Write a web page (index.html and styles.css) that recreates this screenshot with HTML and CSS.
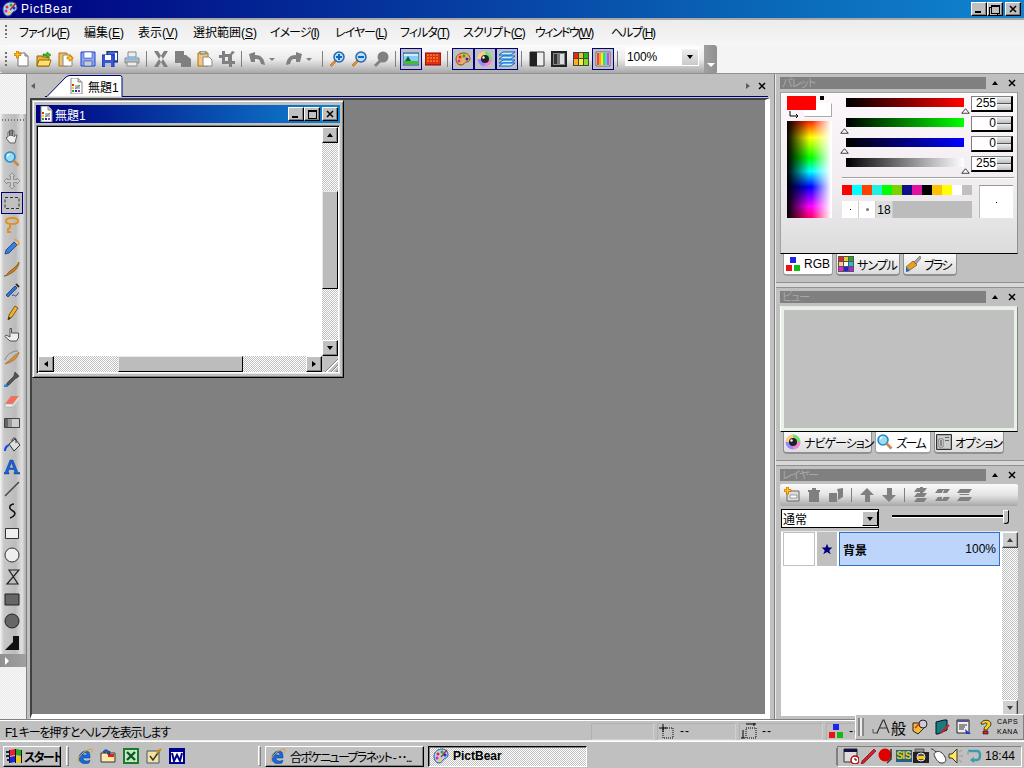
FILE: index.html
```html
<!DOCTYPE html>
<html lang="ja">
<head>
<meta charset="utf-8">
<title>PictBear</title>
<link rel="stylesheet" href="styles.css">
</head>
<body>
<svg class="defs" xmlns="http://www.w3.org/2000/svg">
<symbol id="appicon" viewBox="0 0 16 16"><path d="M1 8c0-4 4-7 8-7s6 3 6 6-3 3-4 4-2 4-5 4-5-3-5-7z" fill="#b8d0ec" stroke="#305890"/><circle cx="5" cy="6" r="1.500" fill="#e22"/><circle cx="9" cy="4" r="1.500" fill="#2a2"/><circle cx="12" cy="7" r="1.500" fill="#22d"/><circle cx="4" cy="10" r="1.500" fill="#d2d"/><circle cx="7" cy="12" r="1.500" fill="#fc2"/><path d="M8 9l6-7" stroke="#a22" stroke-width="1.200"/></symbol>
<symbol id="palette" viewBox="0 0 16 16"><path d="M1 8c0-4 4-6 8-6s6 3 6 6-3 3-4 3-2 3-5 3-5-2-5-6z" fill="#e8b060" stroke="#805020"/><circle cx="5" cy="6" r="1.500" fill="#e22"/><circle cx="9" cy="5" r="1.500" fill="#2a2"/><circle cx="12" cy="8" r="1.500" fill="#22d"/><circle cx="4" cy="10" r="1.500" fill="#d2d"/></symbol>
<symbol id="doc" viewBox="0 0 16 16"><path d="M3 0h7l4 4v12H3z" fill="#fff" stroke="#888"/><path d="M10 0v4h4" fill="#ccc" stroke="#888"/><path d="M4 6h2v2H4z" fill="#e22"/><path d="M4 9h2v2H4z" fill="#fc0"/><path d="M4 12h2v2H4z" fill="#2a2"/><path d="M7 12h2v2H7z" fill="#22c"/><path d="M10 12h2v2h-2z" fill="#a2c"/><path d="M7 7h5v4H7z" fill="#8cd"/><path d="M7 11l5-4" stroke="#c60"/></symbol>
<symbol id="new" viewBox="0 0 16 16"><path d="M4 2h7l3 3v10H4z" fill="#fff" stroke="#777"/><path d="M11 2v3h3" fill="#ccc" stroke="#777"/><path d="M2.500 0h2v2.500H7v2H4.500V7h-2V4.500H0v-2h2.500z" fill="#fc0" stroke="#c60" stroke-width=".7"/></symbol>
<symbol id="open" viewBox="0 0 16 16"><path d="M1 5h5l1 1h6v9H1z" fill="#e8b040" stroke="#960"/><path d="M1 15l2-6h12l-2 6z" fill="#ffe070" stroke="#960"/><path d="M7 3h4V1l4 3-4 3V5H7z" fill="#4b3" stroke="#270" stroke-width=".6"/></symbol>
<symbol id="tmpl" viewBox="0 0 16 16"><path d="M1 2h8v13H1z" fill="#f0c070" stroke="#a70"/><path d="M5 4h7l2 2v9H5z" fill="#fff" stroke="#888"/><path d="M11 4h2v2h2v2h-2v2h-2V8H9V6h2z" fill="#fc0" stroke="#c60" stroke-width=".6"/></symbol>
<symbol id="save" viewBox="0 0 16 16"><path d="M1 1h14v14H1z" fill="#8aa8e8" stroke="#2244cc"/><path d="M4 1h8v6H4z" fill="#fff" stroke="#2244cc" stroke-width=".6"/><path d="M4 10h8v5H4z" fill="#ccc" stroke="#2244cc" stroke-width=".6"/></symbol>
<symbol id="saveall" viewBox="0 0 16 16"><path d="M5 0h11v11H5z" fill="#4468d8" stroke="#113"/><path d="M0 4h12v12H0z" fill="#3858d0" stroke="#1133bb"/><path d="M3 4h6v5H3z" fill="#fff"/><path d="M3 12h6v4H3z" fill="#bbc"/><path d="M13 2h2v7h-2z" fill="#fff"/></symbol>
<symbol id="print" viewBox="0 0 16 16"><path d="M4 1h8v5H4z" fill="#eee" stroke="#888"/><path d="M1 7h14v5H1z" fill="#bbb" stroke="#888"/><path d="M3 6h10l2 3H1z" fill="#8bd" /><path d="M3 11h10v4H3z" fill="#eee" stroke="#888"/></symbol>
<symbol id="cut" viewBox="0 0 16 16"><path d="M1 0h4l10 16h-4zM15 0h-4L1 16h4z" fill="#808080"/></symbol>
<symbol id="copy" viewBox="0 0 16 16"><path d="M0 0h9v4H6v8H0z" fill="#808080"/><path d="M6 4h5l5 4v8H6z" fill="#808080"/></symbol>
<symbol id="paste" viewBox="0 0 16 16"><path d="M1 2h10v13H1z" fill="#f0c880" stroke="#a70"/><path d="M3 0h6v3H3z" fill="#ccc" stroke="#777"/><path d="M6 6h6l3 3v6H6z" fill="#fff" stroke="#888"/></symbol>
<symbol id="crop" viewBox="0 0 16 16"><path d="M3 0h3v3h5l2-3 3 1-3 3v6h3v3h-3v3h-3v-3H3V7H0V4h3zM6 6v4h3V6z" fill="#808080" fill-rule="evenodd"/></symbol>
<symbol id="undo" viewBox="0 0 16 16"><path d="M0 3l6-2v3c6 0 9 3 10 10l-4-1-1-3c-1-2-3-2-5-2v3H2z" fill="#808080"/></symbol>
<symbol id="redo" viewBox="0 0 16 16"><path d="M16 3l-6-2v3C4 4 1 7 0 14l4-1 1-3c1-2 3-2 5-2v3h4z" fill="#808080"/></symbol>
<symbol id="zin" viewBox="0 0 16 16"><path d="M6 9l-5 5 1.500 1.500 5-5z" fill="#e09030" stroke="#a50" stroke-width=".5"/><circle cx="10" cy="6" r="5" fill="#bde" stroke="#26a" stroke-width="1.500"/><path d="M7 5h6v2H7zM9 3h2v6H9z" fill="#16c"/></symbol>
<symbol id="zout" viewBox="0 0 16 16"><path d="M6 9l-5 5 1.500 1.500 5-5z" fill="#e09030" stroke="#a50" stroke-width=".5"/><circle cx="10" cy="6" r="5" fill="#bde" stroke="#26a" stroke-width="1.500"/><path d="M7 5h6v2H7z" fill="#16c"/></symbol>
<symbol id="zgray" viewBox="0 0 16 16"><circle cx="10" cy="6" r="5.500" fill="#808080"/><path d="M7 8l-6 6 2 2 6-6z" fill="#808080"/></symbol>
<symbol id="land" viewBox="0 0 16 16"><path d="M0 2h16v12H0z" fill="#8cf" stroke="#258"/><path d="M1 10h14v3H1z" fill="#4b3"/><path d="M5 5l3 5H2z" fill="#163"/><path d="M1 3h14v2H1z" fill="#fff" opacity=".6"/></symbol>
<symbol id="redb" viewBox="0 0 16 16"><path d="M0 2h16v12H0z" fill="#e03010"/><path d="M2 4h12M2 7h12M2 10h12" stroke="#ffb040" stroke-dasharray="2 1"/><path d="M0 2h16v12H0z" fill="none" stroke="#800"/></symbol>
<symbol id="eye" viewBox="0 0 16 16"><circle cx="8" cy="8" r="7.500" fill="#ddd"/><path d="M8 .5a7.500 7.500 0 0 1 7.500 7.500H8z" fill="#7d7"/><path d="M15.500 8A7.500 7.500 0 0 1 8 15.500V8z" fill="#e8c"/><path d="M8 15.500A7.500 7.500 0 0 1 .5 8H8z" fill="#98f"/><path d="M.5 8A7.500 7.500 0 0 1 8 .5V8z" fill="#fc8"/><circle cx="8" cy="8" r="4" fill="#222"/><circle cx="6.500" cy="6.500" r="1.200" fill="#fff"/></symbol>
<symbol id="layers" viewBox="0 0 16 16"><g fill="#cef" stroke="#06c"><path d="M4 1h12l-4 3H0z"/><path d="M4 5h12l-4 3H0z"/><path d="M4 9h12l-4 3H0z"/><path d="M4 12h12l-4 3H0z"/></g></symbol>
<symbol id="c1" viewBox="0 0 16 16"><path d="M1 1h14v14H1z" fill="#eee" stroke="#333"/><path d="M1 1h7v14H1z" fill="#222"/></symbol>
<symbol id="c2" viewBox="0 0 16 16"><path d="M1 1h14v14H1z" fill="#888" stroke="#222" stroke-width="2"/><path d="M3 3h3v10H3z" fill="#333"/><path d="M6 3h3v10H6z" fill="#777"/><path d="M9 3h4v10H9z" fill="#ddd"/></symbol>
<symbol id="c3" viewBox="0 0 16 16"><path d="M0 1h16v14H0z" fill="#444"/><path d="M1 2h4v5H1z" fill="#e22"/><path d="M6 2h4v5H6z" fill="#dc2"/><path d="M11 2h4v5h-4z" fill="#2b2"/><path d="M1 8h4v6H1z" fill="#fa2"/><path d="M6 8h4v6H6z" fill="#fe2"/><path d="M11 8h4v6h-4z" fill="#8d2"/></symbol>
<symbol id="c4" viewBox="0 0 16 16"><path d="M1 1h14v14H1z" fill="#fff" stroke="#666"/><path d="M2 2h2v12H2z" fill="#e44"/><path d="M4 2h2v12H4z" fill="#f92"/><path d="M6 2h2v12H6z" fill="#ee3"/><path d="M8 2h2v12H8z" fill="#4d4"/><path d="M10 2h2v12h-2z" fill="#4cf"/><path d="M12 2h2v12h-2z" fill="#d4d"/></symbol>
<symbol id="hand" viewBox="0 0 16 16"><path d="M4 8V3h1.500v4V1.500H7V7V1h1.500v6V2H10v6l1.500-2H13l-2 8H6L2 9l1-1z" fill="#eee" stroke="#555" stroke-width=".9"/></symbol>
<symbol id="zoom" viewBox="0 0 16 16"><circle cx="6" cy="6" r="5" fill="#9de" stroke="#28c" stroke-width="1.600"/><path d="M3 3l3 0-3 3z" fill="#fff"/><path d="M9.500 9.500l5 5" stroke="#c84" stroke-width="2.600"/></symbol>
<symbol id="move" viewBox="0 0 16 16"><path d="M8 0l3 3H9.500v3.500H13V5l3 3-3 3V9.500H9.500V13H11l-3 3-3-3h1.500V9.500H3V11L0 8l3-3v1.500h3.500V3H5z" fill="#ccc" stroke="#888" stroke-width=".8"/></symbol>
<symbol id="marq" viewBox="0 0 16 16"><path d="M1 2.500h14v11H1z" fill="none" stroke="#333" stroke-dasharray="3 2"/></symbol>
<symbol id="lasso" viewBox="0 0 16 16"><path d="M2 4c0-2 3-3 6-3s6 1 6 3-3 3-6 3-6-1-6-3zM6 7v4l-2 1v3h3" fill="none" stroke="#e09020" stroke-width="2"/></symbol>
<symbol id="pen" viewBox="0 0 16 16"><path d="M1 15l1-4 8-8 3 3-8 8z" fill="#3a7de0" stroke="#036"  stroke-width=".7"/><path d="M10 1c2-1 5 1 5 4l-2 1" fill="none" stroke="#e8a030" stroke-width="1.400"/></symbol>
<symbol id="brush" viewBox="0 0 16 16"><path d="M0 15c3 0 3-3 6-5s7-5 9-9c0 4-3 8-6 10s-6 4-9 4z" fill="#d07818" stroke="#640" stroke-width=".6"/></symbol>
<symbol id="air" viewBox="0 0 16 16"><path d="M2 12L11 3l2 2-9 9z" fill="#3a70d0" stroke="#036" stroke-width=".7"/><path d="M8 13c2-3 3 2 5-1s1-2 2-2" fill="none" stroke="#24a" /><path d="M12 1l3 3" stroke="#333" stroke-width="2"/></symbol>
<symbol id="pencil" viewBox="0 0 16 16"><path d="M4 15l1-5 6-9 3 2-6 9z" fill="#f0b030" stroke="#640" stroke-width=".8"/><path d="M4 15l1-3 2 1z" fill="#222"/></symbol>
<symbol id="finger" viewBox="0 0 16 16"><path d="M6 8V1.500h1.500V6h7v5l-2 3H6L1 9.500 2 8l4 2z" fill="#eee" stroke="#444" stroke-width=".9"/></symbol>
<symbol id="smudge" viewBox="0 0 16 16"><path d="M1 15l14-12c-1 6-6 10-14 12z" fill="#e09020" stroke="#864" stroke-width=".6"/><path d="M1 11c2-6 7-9 13-9" fill="none" stroke="#888"/></symbol>
<symbol id="drop" viewBox="0 0 16 16"><path d="M11 1l4 4-2 2-1 0-7 7-3 1 1-3 7-7 0-1z" fill="#555" stroke="#333" stroke-width=".6"/><path d="M0 14c2-1 4 0 4 2H0z" fill="#1a8ae0"/></symbol>
<symbol id="erase" viewBox="0 0 16 16"><path d="M1 11l6-8h8l-6 8z" fill="#f07060"/><path d="M1 11h8v3H1z" fill="#eee" stroke="#aaa" stroke-width=".7"/><path d="M9 11l6-8v3l-6 8z" fill="#ddd"/></symbol>
<symbol id="grad" viewBox="0 0 16 16"><path d="M.5 3.500h15v9H.5z" fill="#999" stroke="#444"/><path d="M8 4h7v8H8z" fill="#ccc"/><path d="M1 4h3v8H1z" fill="#666"/></symbol>
<symbol id="bucket" viewBox="0 0 16 16"><path d="M5 7l6-5 5 6-6 6z" fill="#ddd" stroke="#333"/><path d="M5 7c-3 1-5 3-5 7h2c0-2 1-4 3-5z" fill="#1050e0"/><path d="M8 4c0-3 3-4 4-2v4" fill="none" stroke="#333"/></symbol>
<symbol id="txt" viewBox="0 0 16 16"><path d="M0 15v-1.500h1L6 1h3l5 12.500h2V15h-6v-1.500h1l-1-3H5l-1 3h1V15zM5.500 9h4L7.500 3.500z" fill="#1a60e0" stroke="#036" stroke-width=".4"/></symbol>
<symbol id="line" viewBox="0 0 16 16"><path d="M1 15L15 1" stroke="#444" stroke-width="1.500"/></symbol>
<symbol id="curve" viewBox="0 0 16 16"><path d="M10 1C4 2 5 6 9 8s1 6-3 7" fill="none" stroke="#111" stroke-width="1.500"/></symbol>
<symbol id="rect" viewBox="0 0 16 16"><path d="M1.500 3.500h13v10h-13z" fill="#eee" stroke="#333"/></symbol>
<symbol id="ell" viewBox="0 0 16 16"><circle cx="8" cy="8" r="7" fill="#eee" stroke="#333"/></symbol>
<symbol id="poly" viewBox="0 0 16 16"><path d="M5 1h10L3 15h11L5 1z" fill="none" stroke="#222" stroke-width="1.200"/></symbol>
<symbol id="frect" viewBox="0 0 16 16"><path d="M1 3h14v11H1z" fill="#666" stroke="#222"/></symbol>
<symbol id="fell" viewBox="0 0 16 16"><circle cx="8" cy="8" r="7" fill="#666" stroke="#222"/></symbol>
<symbol id="fpoly" viewBox="0 0 16 16"><path d="M1 15L9 7V1h6v14z" fill="#111"/></symbol>
<symbol id="star" viewBox="0 0 16 16"><path d="M8 1l2 5h5l-4 4 2 5-5-3-5 3 2-5-4-4h5z" fill="#000080"/></symbol>
<symbol id="rgb" viewBox="0 0 16 16"><path d="M5 1h6v6H5z" fill="#22e"/><path d="M1 9h6v6H1z" fill="#e11"/><path d="M9 9h6v6H9z" fill="#1b1"/></symbol>
<symbol id="sample" viewBox="0 0 16 16"><path d="M0 0h16v16H0z" fill="#555"/><path d="M1 1h4v4H1z" fill="#e22"/><path d="M6 1h4v4H6z" fill="#ec2"/><path d="M11 1h4v4h-4z" fill="#2a2"/><path d="M1 6h4v4H1z" fill="#fc8"/><path d="M6 6h4v4H6z" fill="#fff"/><path d="M11 6h4v4h-4z" fill="#2bd"/><path d="M1 11h4v4H1z" fill="#e2d"/><path d="M6 11h4v4H6z" fill="#22d"/><path d="M11 11h4v4h-4z" fill="#a2e"/></symbol>
<symbol id="bigbrush" viewBox="0 0 16 16"><path d="M9 6l6-6 1 2-5 6z" fill="#aaa" stroke="#555" stroke-width=".6"/><path d="M1 11l7-6 4 4-7 5z" fill="#e8a020" stroke="#640" stroke-width=".6"/><path d="M1 11l4 4-4 1z" fill="#16c"/></symbol>
<symbol id="opts" viewBox="0 0 16 16"><path d="M.5 .5h15v15H.5z" fill="#aaa" stroke="#333"/><path d="M2 2h12v12H2z" fill="#ccc"/><path d="M3 5h4v8H3z" fill="#fff" stroke="#333" stroke-width=".6"/><path d="M4.500 6h1v6h-1z" fill="#111"/><path d="M9 3h4v1H9zM9 6h4v1H9z" fill="#666"/></symbol>
<symbol id="lnew" viewBox="0 0 16 16"><path d="M3 4h12v10H3z" fill="#ddd" stroke="#666"/><path d="M6 8h7v3H6z" fill="#fff" stroke="#666" stroke-width=".6"/><path d="M2.500 0h2v2.500H7v2H4.500V7h-2V4.500H0v-2h2.500z" fill="#fc0" stroke="#c60" stroke-width=".7"/></symbol>
<symbol id="ltrash" viewBox="0 0 16 16"><path d="M2 3h12v2H2zM6 1h4v2H6zM3 5h10v10H3z" fill="#808080"/></symbol>
<symbol id="lcopy" viewBox="0 0 16 16"><path d="M1 6h8v9H1zM9 2l6-1v9l-5 3V5z" fill="#808080"/></symbol>
<symbol id="lup" viewBox="0 0 16 16"><path d="M8 1l7 7h-4v7H6V8H1z" fill="#808080"/></symbol>
<symbol id="ldown" viewBox="0 0 16 16"><path d="M8 15L1 8h5V1h5v7h4z" fill="#808080"/></symbol>
<symbol id="lm1" viewBox="0 0 16 16"><path d="M5 1h10l-3 4H2zM5 6h10l-3 4H2zM5 11h10l-3 4H2z" fill="#808080"/><path d="M8 0h3v8H8z" fill="#808080"/></symbol>
<symbol id="lm2" viewBox="0 0 16 16"><path d="M4 2h12l-3 4H1zM4 10h12l-3 4H1z" fill="#808080"/><path d="M10 3l-3 5h3l-2 4" fill="none" stroke="#eee"/></symbol>
<symbol id="lm3" viewBox="0 0 16 16"><path d="M4 2h12l-3 4H1zM4 10h12l-3 4H1zM4 7h9v1H3z" fill="#808080"/></symbol>
<symbol id="flag" viewBox="0 0 16 16"><path d="M0 3h3v2H0zM0 7h3v2H0zM1 11h2v2H1z" fill="#225"/><path d="M4 2l5-1v6L4 8z" fill="#e22"/><path d="M10 1l5 1v6l-5-1z" fill="#2a2"/><path d="M4 9l5-1v6l-5 1z" fill="#22d"/><path d="M10 8l5 1v6l-5-1z" fill="#ec1"/><path d="M3.500 2v13M9.500 1v14M15.500 2v13" stroke="#111"/></symbol>
<symbol id="ie" viewBox="0 0 16 16"><path d="M13 10H6c0 3 4 4 7 2l-1 3c-5 2-10 0-10-5s6-9 10-6c1 2 1 4 1 6zM6 7h4c0-3-4-3-4 0z" fill="#1868d8" stroke="#0a3a90" stroke-width=".5"/><path d="M1 14C0 9 8 2 14 1c2 1 1 3 0 4" fill="none" stroke="#e0a020"/></symbol>
<symbol id="mail" viewBox="0 0 16 16"><path d="M1 5h14v9H1z" fill="#ffe9a8" stroke="#333"/><path d="M8 6h6v3H8z" fill="#d22"/><path d="M3 4c1-3 5-3 6 0l1-1v3H7l1-1c-1-2-3-1-3 0z" fill="#1a5cd0" stroke="#003" stroke-width=".4"/></symbol>
<symbol id="excel" viewBox="0 0 16 16"><path d="M0 0h16v16H0z" fill="#1a7a30"/><path d="M2 2h12v12H2z" fill="#c8e4c8"/><path d="M4 4l8 8M12 4l-8 8" stroke="#0a5a20" stroke-width="2.400"/></symbol>
<symbol id="check" viewBox="0 0 16 16"><path d="M1 3h12v12H1z" fill="#f4e0a0" stroke="#456"/><path d="M4 8l3 4 7-10" fill="none" stroke="#333" stroke-width="1.400"/><path d="M11 5l4-4" stroke="#d80" stroke-width="2"/></symbol>
<symbol id="word" viewBox="0 0 16 16"><path d="M0 0h16v16H0z" fill="#000090"/><path d="M2 2h12v12H2z" fill="#fff"/><path d="M3 5l2 8 3-6 3 6 2-8" fill="none" stroke="#000090" stroke-width="2"/><path d="M2 2h12v2H2z" fill="#000090"/></symbol>
<symbol id="t1" viewBox="0 0 16 16"><path d="M1 1h13v13H1z" fill="#ddd" stroke="#333"/><path d="M1 1h13v3H1z" fill="#114"/><circle cx="12" cy="12" r="4" fill="#fff" stroke="#b00" stroke-width="1.500"/><path d="M12 10v2h2" stroke="#111" fill="none"/></symbol>
<symbol id="t2" viewBox="0 0 16 16"><path d="M0 16l3-1 12-12-2-2L1 13z" fill="#d02030" stroke="#600" stroke-width=".6"/></symbol>
<symbol id="t3" viewBox="0 0 16 16"><circle cx="7" cy="7" r="6.500" fill="#e00000"/><path d="M13 1v10l-4 4" fill="none" stroke="#333" stroke-width="1.500"/></symbol>
<symbol id="t5" viewBox="0 0 16 16"><path d="M0 4h16v11H0z" fill="#222"/><path d="M2 1h9v3H2z" fill="#999" stroke="#222" stroke-width=".6"/><circle cx="8" cy="9" r="4" fill="#555" stroke="#eee"/><path d="M5 8h6v3H5z" fill="#fc0"/></symbol>
<symbol id="t6" viewBox="0 0 16 16"><path d="M5 4c3-2 7 1 9 5s0 6-3 6-5-2-7-6 0-4 1-5z" fill="#fff" stroke="#333"/><path d="M0 1c2 0 3 1 5 3" fill="none" stroke="#333"/></symbol>
<symbol id="t7" viewBox="0 0 16 16"><path d="M1 6h3l5-5v14l-5-5H1z" fill="#ffe860" stroke="#333"/><path d="M11 4l3-2M11 8h4M11 12l3 2" stroke="#999"/></symbol>
<symbol id="t8" viewBox="0 0 16 16"><path d="M2 3h9c4 0 4 9 0 9H6" fill="none" stroke="#3a9ab0" stroke-width="2.400"/><path d="M8 9l-4 3 4 3z" fill="#3a9ab0"/><path d="M2 3v4" stroke="#aaa" stroke-width="2"/></symbol>
<symbol id="l1" viewBox="0 0 18 18"><path d="M1 15h5M1 11v4" stroke="#777" stroke-width="1.500"/><path d="M5 15L11 2h1l5 13M7 10h8" fill="none" stroke="#333" stroke-width="1.200"/></symbol>
<symbol id="l2" viewBox="0 0 16 16"><path d="M1 4h8l3 5-6 6-5-3z" fill="#f0c030" stroke="#222"/><circle cx="11" cy="5" r="4" fill="#ccd" stroke="#222"/><path d="M3 9l5-5" stroke="#d22" stroke-width="1.400"/></symbol>
<symbol id="l3" viewBox="0 0 16 16"><path d="M2 3l8-2h3v10l-9 4H2z" fill="#1a7a80" stroke="#012"/><path d="M7 14l8-8" stroke="#c22" stroke-width="2"/></symbol>
<symbol id="l4" viewBox="0 0 16 16"><path d="M1 1h12v13H1z" fill="#eee" stroke="#222"/><path d="M1 1h12v2H1z" fill="#558"/><path d="M3 6h8M3 8h6M3 10h5" stroke="#333"/><path d="M9 10l6 5h-5z" fill="#1a3ad0"/></symbol>
<symbol id="l5" viewBox="0 0 16 16"><path d="M3 5c0-5 10-5 10 0 0 3-4 4-4 6H6c0-4 3-4 3-6s-3-1-3 0z" fill="#f8d820" stroke="#111" stroke-width=".8"/><path d="M5 12h5v3H5z" fill="#d22" stroke="#111" stroke-width=".6"/></symbol>
<symbol id="tri-up" viewBox="0 0 8 8"><path d="M4 2l3 4H1z" fill="#000"/></symbol>
<symbol id="tri-down" viewBox="0 0 8 8"><path d="M1 2h6L4 6z" fill="#000"/></symbol>
<symbol id="tri-left" viewBox="0 0 8 8"><path d="M6 1v6L2 4z" fill="#000"/></symbol>
<symbol id="tri-right" viewBox="0 0 8 8"><path d="M2 1v6l4-3z" fill="#000"/></symbol>
<symbol id="x" viewBox="0 0 8 8"><path d="M1 1l6 6M7 1L1 7" stroke="#000" stroke-width="1.500"/></symbol>
<symbol id="mark" viewBox="0 0 12 8"><path d="M6 1l5 6H1z" fill="#fff" stroke="#000"/></symbol>
<symbol id="swap" viewBox="0 0 10 8"><path d="M1 0v5h8M7 3l2 2-2 2" fill="none" stroke="#000"/></symbol>
<symbol id="st1" viewBox="0 0 16 16"><path d="M4 5h10v10H4z" fill="none" stroke="#000" stroke-dasharray="1 1"/><path d="M0 5h8M4 1v8" stroke="#000"/></symbol>
<symbol id="st2" viewBox="0 0 16 16"><path d="M5 5h10v10H5z" fill="none" stroke="#000" stroke-dasharray="1 1"/><path d="M5 1h10M2 7v8M0 15h4M13 0v3" stroke="#000"/></symbol>
</svg>

<div class="app">
  <header class="titlebar">
    <svg class="ico16"><use href="#appicon"/></svg>
    <span class="titlebar-text">PictBear</span>
    <div class="winbtns">
      <button class="winbtn"><span class="g-min"></span></button>
      <button class="winbtn"><span class="g-res"></span></button>
      <button class="winbtn winbtn-close"><svg class="ico8"><use href="#x"/></svg></button>
    </div>
  </header>

  <nav class="menubar">
    <span class="grip-v"></span>
    <span class="menu-item ls-10">ファイル(<u>F</u>)</span>
    <span class="menu-item">編集(<u>E</u>)</span>
    <span class="menu-item">表示(<u>V</u>)</span>
    <span class="menu-item">選択範囲(<u>S</u>)</span>
    <span class="menu-item ls-10">イメージ(<u>I</u>)</span>
    <span class="menu-item ls-10">レイヤー(<u>L</u>)</span>
    <span class="menu-item ls-10">フィルタ(<u>T</u>)</span>
    <span class="menu-item ls-8">スクリプト(<u>C</u>)</span>
    <span class="menu-item ls-16">ウィンドウ(<u>W</u>)</span>
    <span class="menu-item ls-12">ヘルプ(<u>H</u>)</span>
  </nav>

  <div class="toolrow">
    <div class="toolbar">
      <span class="grip-v"></span>
      <span class="tb"><svg class="ico16"><use href="#new"/></svg></span>
      <span class="tb"><svg class="ico16"><use href="#open"/></svg></span>
      <span class="tb"><svg class="ico16"><use href="#tmpl"/></svg></span>
      <span class="tb"><svg class="ico16"><use href="#save"/></svg></span>
      <span class="tb"><svg class="ico16"><use href="#saveall"/></svg></span>
      <span class="tb"><svg class="ico16"><use href="#print"/></svg></span>
      <span class="tsep"></span>
      <span class="tb"><svg class="ico16"><use href="#cut"/></svg></span>
      <span class="tb"><svg class="ico16"><use href="#copy"/></svg></span>
      <span class="tb"><svg class="ico16"><use href="#paste"/></svg></span>
      <span class="tb"><svg class="ico16"><use href="#crop"/></svg></span>
      <span class="tsep"></span>
      <span class="tb tb-drop"><svg class="ico16"><use href="#undo"/></svg><i class="drop-g"></i></span>
      <span class="tb tb-drop"><svg class="ico16"><use href="#redo"/></svg><i class="drop-g"></i></span>
      <span class="tsep"></span>
      <span class="tb"><svg class="ico16"><use href="#zin"/></svg></span>
      <span class="tb"><svg class="ico16"><use href="#zout"/></svg></span>
      <span class="tb"><svg class="ico16"><use href="#zgray"/></svg></span>
      <span class="tsep tsep-w"></span>
      <span class="tb tb-on"><svg class="ico16"><use href="#land"/></svg></span>
      <span class="tb"><svg class="ico16"><use href="#redb"/></svg></span>
      <span class="tsep tsep-w"></span>
      <span class="tb tb-on"><svg class="ico16"><use href="#palette"/></svg></span>
      <span class="tb tb-on"><svg class="ico16"><use href="#eye"/></svg></span>
      <span class="tb tb-on"><svg class="ico16"><use href="#layers"/></svg></span>
      <span class="tsep tsep-w"></span>
      <span class="tb"><svg class="ico16"><use href="#c1"/></svg></span>
      <span class="tb"><svg class="ico16"><use href="#c2"/></svg></span>
      <span class="tb"><svg class="ico16"><use href="#c3"/></svg></span>
      <span class="tb tb-on"><svg class="ico16"><use href="#c4"/></svg></span>
      <span class="tsep"></span>
      <span class="zoom-combo"><span class="zoom-val">100%</span><span class="combo-btn"><svg class="ico8"><use href="#tri-down"/></svg></span></span>
      <span class="tool-end"><i class="tool-end-g"></i></span>
    </div>
  </div>

  <main class="workspace">
    <aside class="leftcol">
      <div class="toolbox">
        <span class="tool-grip"></span>
        <span class="tl"><svg class="ico16"><use href="#hand"/></svg></span>
        <span class="tl"><svg class="ico16"><use href="#zoom"/></svg></span>
        <span class="tl"><svg class="ico16"><use href="#move"/></svg></span>
        <span class="tl tl-on"><svg class="ico16"><use href="#marq"/></svg></span>
        <span class="tl"><svg class="ico16"><use href="#lasso"/></svg></span>
        <span class="tl"><svg class="ico16"><use href="#pen"/></svg></span>
        <span class="tl"><svg class="ico16"><use href="#brush"/></svg></span>
        <span class="tl"><svg class="ico16"><use href="#air"/></svg></span>
        <span class="tl"><svg class="ico16"><use href="#pencil"/></svg></span>
        <span class="tl"><svg class="ico16"><use href="#finger"/></svg></span>
        <span class="tl"><svg class="ico16"><use href="#smudge"/></svg></span>
        <span class="tl"><svg class="ico16"><use href="#drop"/></svg></span>
        <span class="tl"><svg class="ico16"><use href="#erase"/></svg></span>
        <span class="tl"><svg class="ico16"><use href="#grad"/></svg></span>
        <span class="tl"><svg class="ico16"><use href="#bucket"/></svg></span>
        <span class="tl"><svg class="ico16"><use href="#txt"/></svg></span>
        <span class="tl"><svg class="ico16"><use href="#line"/></svg></span>
        <span class="tl"><svg class="ico16"><use href="#curve"/></svg></span>
        <span class="tl"><svg class="ico16"><use href="#rect"/></svg></span>
        <span class="tl"><svg class="ico16"><use href="#ell"/></svg></span>
        <span class="tl"><svg class="ico16"><use href="#poly"/></svg></span>
        <span class="tl"><svg class="ico16"><use href="#frect"/></svg></span>
        <span class="tl"><svg class="ico16"><use href="#fell"/></svg></span>
        <span class="tl"><svg class="ico16"><use href="#fpoly"/></svg></span>
        <span class="tool-more"></span>
      </div>
    </aside>

    <section class="docarea">
      <div class="tabstrip">
        <svg class="ico8 strip-arrow"><use href="#tri-left"/></svg>
        <div class="doctab">
          <svg class="doctab-shape" viewBox="0 0 78 22"><path d="M0 21.500h2L21 2q2-1.500 4-1.500h50q2 0 2 2v19" fill="#fff" stroke="#000080"/></svg>
          <svg class="ico16 doctab-ico"><use href="#doc"/></svg>
          <span class="doctab-text">無題1</span>
        </div>
        <span class="strip-fill"></span>
        <svg class="ico8 strip-arrow strip-right"><use href="#tri-right"/></svg>
        <svg class="ico8 strip-x"><use href="#x"/></svg>
      </div>
      <div class="mdi">
        <div class="child">
          <div class="child-title">
            <svg class="ico16"><use href="#doc"/></svg>
            <span class="child-text">無題1</span>
            <div class="winbtns child-btns">
              <button class="winbtn"><span class="g-min"></span></button>
              <button class="winbtn"><span class="g-max"></span></button>
              <button class="winbtn winbtn-close"><svg class="ico8"><use href="#x"/></svg></button>
            </div>
          </div>
          <div class="child-client">
            <div class="canvas-row">
              <div class="canvas"></div>
              <div class="vscroll">
                <span class="sb-btn"><svg class="ico8"><use href="#tri-up"/></svg></span>
                <span class="sb-track sb-v1"></span>
                <span class="sb-thumb sb-thumb-v"></span>
                <span class="sb-track"></span>
                <span class="sb-btn"><svg class="ico8"><use href="#tri-down"/></svg></span>
              </div>
            </div>
            <div class="hscroll">
              <span class="sb-btn"><svg class="ico8"><use href="#tri-left"/></svg></span>
              <span class="sb-track sb-h1"></span>
              <span class="sb-thumb sb-thumb-h"></span>
              <span class="sb-track"></span>
              <span class="sb-btn"><svg class="ico8"><use href="#tri-right"/></svg></span>
              <span class="sizegrip"></span>
            </div>
          </div>
        </div>
      </div>
    </section>

    <aside class="dock">
      <div class="caption"><span class="caption-bar ls-10">パレット</span><svg class="ico8"><use href="#tri-up"/></svg><svg class="ico8"><use href="#x"/></svg></div>
      <div class="panel panel-palette">
        <div class="pal-left">
          <div class="fgbg">
            <span class="bgcolor"></span><span class="fgcolor"></span><span class="minisq"></span>
            <svg class="swap"><use href="#swap"/></svg>
          </div>
          <div class="spectrum"></div>
        </div>
        <div class="pal-right">
          <div class="slrow"><div class="slbar sl-r"></div><svg class="mark mark-max"><use href="#mark"/></svg><div class="spin"><span class="spin-val">255</span><span class="spin-btns"><i></i><i></i></span></div></div>
          <div class="slrow"><div class="slbar sl-g"></div><svg class="mark mark-min"><use href="#mark"/></svg><div class="spin"><span class="spin-val">0</span><span class="spin-btns"><i></i><i></i></span></div></div>
          <div class="slrow"><div class="slbar sl-b"></div><svg class="mark mark-min"><use href="#mark"/></svg><div class="spin"><span class="spin-val">0</span><span class="spin-btns"><i></i><i></i></span></div></div>
          <div class="slrow"><div class="slbar sl-k"></div><svg class="mark mark-max"><use href="#mark"/></svg><div class="spin"><span class="spin-val">255</span><span class="spin-btns"><i></i><i></i></span></div></div>
          <div class="pal-sep"></div>
          <div class="pal-lower">
            <div class="pal-lower-left">
              <div class="swatches"><i class="s1"></i><i class="s2"></i><i class="s3"></i><i class="s4"></i><i class="s5"></i><i class="s6"></i><i class="s7"></i><i class="s8"></i><i class="s9"></i><i class="s10"></i><i class="s11"></i><i class="s12"></i><i class="s13"></i></div>
              <div class="brushes"><span class="brush-cell"><i class="dot"></i></span><span class="brush-cell"><i class="dot dot-soft"></i></span><span class="brush-cell brush-num">18</span><span class="brush-rest"></span></div>
            </div>
            <div class="brush-preview"><i class="dot"></i></div>
          </div>
        </div>
      </div>
      <div class="tabs">
        <span class="tab tab-on w50"><svg class="ico16"><use href="#rgb"/></svg>RGB</span>
        <span class="tab w64 ls-10"><svg class="ico16"><use href="#sample"/></svg>サンプル</span>
        <span class="tab w54 ls-16"><svg class="ico16"><use href="#bigbrush"/></svg>ブラシ</span>
      </div>
      <div class="splitter"></div>

      <div class="caption"><span class="caption-bar ls-10">ビュー</span><svg class="ico8"><use href="#tri-up"/></svg><svg class="ico8"><use href="#x"/></svg></div>
      <div class="panel panel-view"><div class="view-well"></div></div>
      <div class="tabs">
        <span class="tab w89 ls-10"><svg class="ico16"><use href="#eye"/></svg>ナビゲーション</span>
        <span class="tab tab-on w56 ls-16"><svg class="ico16"><use href="#zoom"/></svg>ズーム</span>
        <span class="tab w70 ls-12"><svg class="ico16"><use href="#opts"/></svg>オプション</span>
      </div>
      <div class="splitter"></div>

      <div class="caption"><span class="caption-bar ls-10">レイヤー</span><svg class="ico8"><use href="#tri-up"/></svg><svg class="ico8"><use href="#x"/></svg></div>
      <div class="layerbar">
        <span class="lb"><svg class="ico16"><use href="#lnew"/></svg></span>
        <span class="lb"><svg class="ico16"><use href="#ltrash"/></svg></span>
        <span class="lb"><svg class="ico16"><use href="#lcopy"/></svg></span>
        <span class="lsep"></span>
        <span class="lb"><svg class="ico16"><use href="#lup"/></svg></span>
        <span class="lb"><svg class="ico16"><use href="#ldown"/></svg></span>
        <span class="lsep"></span>
        <span class="lb"><svg class="ico16"><use href="#lm1"/></svg></span>
        <span class="lb"><svg class="ico16"><use href="#lm2"/></svg></span>
        <span class="lb"><svg class="ico16"><use href="#lm3"/></svg></span>
      </div>
      <div class="blendrow">
        <div class="blend"><span class="blend-val">通常</span><span class="combo-btn"><svg class="ico8"><use href="#tri-down"/></svg></span></div>
        <div class="opacity"><span class="opacity-thumb"></span></div>
      </div>
      <div class="layerlist">
        <div class="layer-main">
          <div class="layer-row">
            <span class="layer-thumb"></span>
            <span class="layer-eye"><svg class="ico16 star"><use href="#star"/></svg></span>
            <span class="layer-name"><b>背景</b><span>100%</span></span>
          </div>
        </div>
        <div class="vscroll">
          <span class="sb-btn sb-btn-dis"><svg class="ico8"><use href="#tri-up"/></svg></span>
          <span class="sb-track"></span>
          <span class="sb-btn sb-btn-dis"><svg class="ico8"><use href="#tri-down"/></svg></span>
        </div>
      </div>
    </aside>
  </main>

  <footer class="statusbar">
    <span class="status-msg"><span class="ls-12">F1 キーを押すとヘルプを表示します</span></span>
    <span class="pane p1"></span>
    <span class="pane p2"><svg class="ico16"><use href="#st1"/></svg>--</span>
    <span class="pane p3"><svg class="ico16"><use href="#st2"/></svg>--</span>
    <span class="pane p4"><svg class="ico16"><use href="#rgb"/></svg>--</span>
  </footer>

  <footer class="taskbar">
    <button class="startbtn"><svg class="ico16"><use href="#flag"/></svg><b class="start-label">スタート</b></button>
    <span class="tk-handle"></span>
    <div class="quick">
      <svg class="ico16"><use href="#ie"/></svg>
      <svg class="ico16"><use href="#mail"/></svg>
      <svg class="ico16"><use href="#excel"/></svg>
      <svg class="ico16"><use href="#check"/></svg>
      <svg class="ico16"><use href="#word"/></svg>
    </div>
    <span class="tk-handle"></span>
    <button class="taskbtn"><svg class="ico16"><use href="#ie"/></svg><span class="ls-16">合ポケニュープラネット - ･･...</span></button>
    <button class="taskbtn taskbtn-on"><svg class="ico16"><use href="#appicon"/></svg><b>PictBear</b></button>
    <span class="tk-fill"></span>
    <div class="tray">
      <svg class="ico16"><use href="#t1"/></svg>
      <svg class="ico16"><use href="#t2"/></svg>
      <svg class="ico16"><use href="#t3"/></svg>
      <span class="sis">SIS</span>
      <svg class="ico16"><use href="#t5"/></svg>
      <svg class="ico16"><use href="#t6"/></svg>
      <svg class="ico16"><use href="#t7"/></svg>
      <svg class="ico16"><use href="#t8"/></svg>
      <span class="clock">18:44</span>
    </div>
  </footer>

  <div class="langbar">
    <span class="lang-handle"></span>
    <svg class="lang-a"><use href="#l1"/></svg>
    <span class="lang-kan">般</span>
    <svg class="ico16"><use href="#l2"/></svg>
    <svg class="ico16"><use href="#l3"/></svg>
    <svg class="ico16"><use href="#l4"/></svg>
    <svg class="ico16"><use href="#l5"/></svg>
    <span class="lang-caps">CAPS<br>KANA</span>
  </div>
</div>
</body>
</html>
```

FILE: styles.css
```css
* { box-sizing: border-box; }
html, body { margin: 0; padding: 0; width: 1024px; height: 768px; overflow: hidden; }
body {
  font-family: "Liberation Sans", "Noto Sans CJK JP", sans-serif;
  font-size: 12px;
  font-feature-settings: "palt";
  color: #000;
  background: #c0c0c0;
}
.defs { position: absolute; width: 0; height: 0; overflow: hidden; }
button { font: inherit; margin: 0; padding: 0; color: inherit; }
i { font-style: normal; display: block; }
svg { display: block; flex: none; }
.ico16 { width: 16px; height: 16px; }
.ico8 { width: 8px; height: 8px; }
.ls-8 { letter-spacing: -.8px; }
.ls-10 { letter-spacing: -1px; }
.ls-12 { letter-spacing: -1.2px; }
.ls-16 { letter-spacing: -1.6px; }

.app { position: relative; width: 1024px; height: 768px; display: flex; flex-direction: column; }

/* title */
.titlebar {
  height: 18px; flex: none; display: flex; align-items: center; padding: 0 3px 0 2px; color: #fff;
  background: linear-gradient(to right, #000080, #0a68b8 75%, #1084d0);
}
.titlebar-text { margin-left: 3px; letter-spacing: .8px; }
.winbtns { margin-left: auto; display: flex; }
.winbtn {
  width: 16px; height: 14px; background: #c0c0c0; display: flex; align-items: center; justify-content: center;
  border: 1px solid; border-color: #fff #000 #000 #fff; box-shadow: inset -1px -1px 0 #808080; position: relative;
}
.winbtn-close { margin-left: 2px; }
.g-min { width: 6px; height: 2px; background: #000; margin-top: 6px; margin-right: 2px; }
.g-max { width: 9px; height: 9px; border: 1px solid #000; border-top-width: 2px; }
.g-res { width: 9px; height: 9px; border: 1px solid #000; border-top-width: 2px; box-shadow: -2px 2px 0 -1px #c0c0c0, -2px 2px 0 0 #000; }

/* menu */
.menubar {
  height: 27px; flex: none; display: flex; align-items: center; padding: 0 0 3px 5px;
  border-top: 2px solid #a8a8a8;
  background: linear-gradient(#ececec, #f6f6f6);
}
.grip-v { width: 2px; height: 13px; flex: none; background: repeating-linear-gradient(#707070 0 2px, transparent 2px 4px); }
.menu-item { flex: none; white-space: nowrap; width: 65px; }
.menu-item u { text-underline-offset: 1px; }
.menubar .grip-v { margin-right: 12px; }
.menu-item:nth-child(3) { width: 54px; }
.menu-item:nth-child(4) { width: 55px; }
.menu-item:nth-child(5) { width: 77px; }
.menu-item:nth-child(8) { width: 63px; }
.menu-item:nth-child(9) { width: 72px; }
.menu-item:nth-child(10) { width: 76px; }

/* toolbar */
.toolrow { height: 29px; flex: none; background: #f4f4f4; border-bottom: 1px solid #909090; }
.toolbar {
  width: 717px; height: 28px; display: flex; align-items: center; padding-left: 5px; position: relative;
  background: linear-gradient(#fbfbfb, #ececec 50%, #a8a8a8);
  border-radius: 3px 0 0 3px;
}
.toolbar .grip-v { margin-right: 4px; height: 14px; }
.tb { width: 22px; height: 22px; flex: none; display: flex; align-items: center; justify-content: center; }
.tb-on { background: #c0c0c0; border: 1px solid #000080; }
.tb-drop { width: 37px; justify-content: flex-start; padding-left: 4px; }
.drop-g { width: 0; height: 0; border: 3px solid transparent; border-top: 3px solid #808080; border-bottom: 0; margin-left: 4px; }
.tsep { width: 1px; height: 16px; flex: none; background: #808080; margin: 0 3px; }
.tsep-w { margin-right: 4px; }
.zoom-combo { width: 74px; height: 19px; flex: none; background: #fff; display: flex; align-items: center; margin-left: 4px; margin-top: -5px; padding-left: 2px; }
.zoom-val { flex: 1; letter-spacing: -.2px; }
.combo-btn { width: 16px; height: 16px; display: flex; align-items: center; justify-content: center; background: linear-gradient(#f0f0f0, #c8c8c8); flex: none; margin-right: 1px; }
.tool-end { margin-left: auto; width: 13px; height: 28px; background: linear-gradient(90deg, #a0a0a0, #909090); border-radius: 0 3px 3px 0; position: relative; display: flex; justify-content: center; align-items: flex-end; padding-bottom: 6px; }
.tool-end-g { width: 0; height: 0; border: 4px solid transparent; border-top: 4px solid #fff; border-bottom: 0; }

/* workspace */
.workspace { height: 646px; flex: none; display: flex; background: #c0c0c0; border-bottom: 1px solid #808080; }
.leftcol {
  width: 27px; flex: none; display: flex; flex-direction: column; padding-top: 40px;
  background: #f2f2f2 repeating-conic-gradient(#ececec 0 25%, #f6f6f6 0 50%) 0 0/2px 2px;
  border-right: 1px solid #808080;
}
.toolbox {
  display: flex; flex-direction: column;
  background: linear-gradient(90deg, #f4f4f4, #c8c8c8 15%, #bcbcbc 60%, #e0e0e0 85%, #a8a8a8);
}
.tool-grip { height: 12px; flex: none; background: radial-gradient(circle, #777 0 1px, transparent 1px) 4px 3px/3px 6px repeat-x; }
.tl { height: 22px; flex: none; width: 22px; margin-left: 1px; display: flex; align-items: center; justify-content: center; }
.tl-on { border: 1px solid #000080; background: #c0c0c0; }
.tool-more { height: 13px; flex: none; background: linear-gradient(90deg, #909090, #a0a0a0); position: relative; }
.tool-more::after { content: ""; position: absolute; left: 5px; top: 3px; border: 4px solid transparent; border-left: 4px solid #fff; border-right: 0; }

.docarea { width: 748px; flex: none; display: flex; flex-direction: column; border-right: 1px solid #808080; }
.tabstrip { height: 24px; flex: none; display: flex; align-items: center; padding: 0 8px 0 2px; position: relative; }
.strip-arrow { opacity: .5; }
.strip-right { margin-left: auto; }
.strip-x { margin-left: 6px; }
.strip-fill { height: 1px; background: #000080; position: absolute; left: 95px; right: 6px; bottom: 1px; }
.doctab { position: relative; width: 78px; height: 22px; margin: 0 0 1px 8px; align-self: flex-end; display: flex; align-items: center; padding-left: 23px; gap: 4px; }
.doctab-shape { position: absolute; left: 0; top: 0; width: 78px; height: 22px; }
.doctab-ico, .doctab-text { position: relative; }
.mdi {
  flex: 1; margin: 0 4px 0 3px; position: relative; background: #808080;
  border: 2px solid; border-color: #404040 #fff #fff #404040; border-width: 2px 5px 5px 2px;
}
.child {
  position: absolute; left: 0; top: 0; width: 312px; height: 278px; background: #c0c0c0; padding: 4px 3px 3px;
  border: 1px solid; border-color: #c0c0c0 #000 #000 #c0c0c0; box-shadow: inset 1px 1px 0 #fff, inset -1px -1px 0 #808080; display: flex; flex-direction: column;
}
.child-title {
  height: 18px; flex: none; display: flex; align-items: center; padding: 0 2px; color: #fff;
  background: linear-gradient(to right, #000080, #1084d0);
}
.child-text { margin-left: 1px; }
.child-client { flex: 1; margin-top: 2px; display: flex; flex-direction: column; background: #fff; border: 1px solid; border-color: #808080 #e8e8e8 #e8e8e8 #808080; box-shadow: inset 1px 1px 0 #000; min-height: 0; padding: 1px; }
.canvas-row { flex: 1; display: flex; min-height: 0; }
.canvas { flex: 1; background: #fff; }
.vscroll { width: 16px; flex: none; display: flex; flex-direction: column; }
.hscroll { height: 16px; flex: none; display: flex; background: #c0c0c0; }
.sb-btn { width: 16px; height: 16px; flex: none; background: #c0c0c0; border: 1px solid; border-color: #fff #000 #000 #fff; box-shadow: inset -1px -1px 0 #808080; display: flex; align-items: center; justify-content: center; }
.sb-track { flex: 1; background: repeating-conic-gradient(#fff 0 25%, #c0c0c0 0 50%) 0 0/2px 2px; }
.sb-v1 { flex: 0 0 48px; }
.sb-h1 { flex: 0 0 64px; }
.sb-thumb { background: #bcbcbc; border: 1px solid; border-color: #e8e8e8 #000 #000 #e8e8e8; flex: none; }
.sb-thumb-v { height: 98px; }
.sb-thumb-h { width: 125px; }
.sizegrip { width: 16px; height: 16px; flex: none; background: repeating-linear-gradient(135deg, #c0c0c0 0 1px, #808080 1px 2px, #fff 2px 3px, #c0c0c0 3px 4px); clip-path: polygon(100% 0, 100% 100%, 0 100%); }

/* dock */
.dock { width: 249px; flex: none; padding: 3px 6px 0 4px; display: flex; flex-direction: column; border-left: 1px solid #e8e8e8; }
.caption { height: 12px; flex: none; display: flex; align-items: center; gap: 9px; }
.caption-bar { width: 206px; height: 12px; background: #808080; color: #a8a8a8; font-size: 11px; line-height: 12px; padding-left: 2px; margin-right: -4px; flex: none; }
.panel { margin-top: 3px; flex: none; border: 1px solid; border-color: #a0a0a0 #909090 #000 #a0a0a0; }
.panel-palette { height: 162px; display: flex; background: linear-gradient(#fcf8fc, #f0ecf0 60%, #dcdcdc); padding: 3px 4px 0 6px; }
.pal-left { width: 46px; flex: none; }
.fgbg { height: 25px; position: relative; }
.fgcolor { position: absolute; left: 0; top: 0; width: 29px; height: 14px; background: #f00; }
.bgcolor { position: absolute; left: 17px; top: 7px; width: 28px; height: 14px; background: #fff; border: 1px solid; border-color: #fff #aaa #aaa #fff; }
.minisq { position: absolute; left: 33px; top: 0; width: 4px; height: 4px; background: #000; }
.swap { position: absolute; left: 2px; top: 15px; width: 10px; height: 8px; }
.spectrum {
  height: 97px; width: 45px;
  background:
    linear-gradient(90deg, #000, rgba(0,0,0,0) 50%, rgba(255,255,255,0) 55%, #fff 98%),
    linear-gradient(#ff2000, #ffff00 17%, #00ff00 38%, #00ffff 52%, #0000ff 68%, #ff00ff 88%, #ff0060);
}
.pal-right { width: 176px; margin-left: 9px; flex: none; }
.slrow { height: 20px; position: relative; display: flex; padding-left: 4px; }
.slbar { width: 118px; height: 9px; margin-top: 2px; flex: none; }
.sl-r { background: linear-gradient(90deg, #000, #f00); }
.sl-g { background: linear-gradient(90deg, #000, #0f0); }
.sl-b { background: linear-gradient(90deg, #000, #00f); }
.sl-k { background: linear-gradient(90deg, #000, #fff); }
.mark { position: absolute; top: 12px; width: 9px; height: 6px; }
.mark-min { left: -2px; }
.mark-max { left: 119px; }
.spin { margin-left: 7px; width: 42px; height: 16px; flex: none; background: #fff; border: 1px solid; border-color: #808080 #000 #000 #808080; border-width: 1px 2px 2px 1px; display: flex; line-height: 13px; }
.spin-val { flex: 1; text-align: right; padding-right: 1px; }
.spin-btns { width: 14px; flex: none; display: flex; flex-direction: column; background: #555; gap: 1px; }
.spin-btns i { flex: 1; background: linear-gradient(#f0f0f0, #bdbdbd); }
.pal-sep { height: 2px; width: 172px; background: #a0a0a0; border-bottom: 1px solid #fff; margin-top: 1px; }
.pal-lower { display: flex; margin-top: 6px; }
.pal-lower-left { width: 130px; flex: none; }
.swatches { display: grid; grid-template-columns: repeat(13, 10px); height: 10px; }
.s1 { background: #f00; } .s2 { background: #0ff; } .s3 { background: #ff4000; } .s4 { background: #20f0e0; } .s5 { background: #0f0; } .s6 { background: #80d000; } .s7 { background: #101088; } .s8 { background: #e010a0; } .s9 { background: #000; } .s10 { background: #ffc000; } .s11 { background: #ff0; } .s12 { background: #fff; } .s13 { background: #c0c0c0; }
.brushes { height: 17px; margin-top: 6px; display: flex; background: #bcbcbc; }
.brush-cell { width: 17px; flex: none; background: #fff; border-right: 1px solid #ccc; display: flex; align-items: center; justify-content: center; }
.brush-num { background: #ddd; font-size: 12px; }
.brush-rest { flex: 1; }
.dot { width: 1px; height: 1px; background: #000; }
.dot-soft { width: 3px; height: 3px; background: #777; border-radius: 50%; }
.brush-preview { width: 34px; height: 33px; margin-left: 7px; background: #fff; border-top: 1px solid #999; border-left: 1px solid #bbb; display: flex; align-items: center; justify-content: center; }

.tabs { height: 22px; flex: none; display: flex; gap: 3px; padding-left: 3px; }
.tab {
  height: 22px; flex: none; display: flex; align-items: center; padding-left: 1px; white-space: nowrap;
  background: linear-gradient(#fafafa, #dcdcdc); border: 1px solid #909090; border-width: 0 1px 2px 1px; border-radius: 0 0 4px 4px;
}
.tab svg { margin-right: 3px; }
.tab-on { background: #fff; border-color: #a0a0a0; }
.w50 { width: 50px; } .w64 { width: 64px; } .w54 { width: 54px; } .w89 { width: 89px; } .w56 { width: 56px; } .w70 { width: 70px; }
.splitter { height: 6px; flex: none; margin: 6px -6px 3px -4px; border-top: 1px solid #909090; border-bottom: 1px solid #909090; background: #d8d8d8; }
.panel-view { height: 126px; padding: 3px; background: #e8f0e8; border-color: #e8e8e8 #808080 #000 #fff; }
.view-well { height: 100%; background: #c0c0c0; }

.layerbar { margin-top: 3px; height: 22px; flex: none; display: flex; align-items: center; padding-left: 1px; background: linear-gradient(#fafafa, #e4e4e4 50%, #a8a8a8); border-radius: 2px; }
.lb { width: 22px; flex: none; display: flex; justify-content: center; }
.lsep { width: 1px; height: 14px; flex: none; background: #808080; margin: 0 4px; }
.blendrow { height: 22px; flex: none; display: flex; align-items: flex-start; margin-top: 3px; padding-left: 1px; }
.blend { width: 98px; height: 19px; flex: none; background: #fff; border: 1px solid #000; display: flex; align-items: center; padding-left: 1px; }
.blend-val { flex: 1; }
.blend .combo-btn { border: 1px solid; border-color: #fff #000 #000 #fff; background: #c0c0c0; height: 15px; margin-right: 0; }
.opacity { width: 117px; height: 3px; margin: 6px 0 0 13px; background: #000; border-bottom: 1px solid #fff; position: relative; flex: none; }
.opacity-thumb { position: absolute; right: 0; top: -5px; width: 6px; height: 14px; background: #c0c0c0; border: 1px solid; border-color: #fff #000 #000 #fff; border-radius: 0 0 3px 3px; }
.layerlist { width: 237px; flex: 1; margin: 0 0 3px 1px; background: #fff; display: flex; min-height: 0; border-top: 1px solid #e8e8e8; }
.layer-main { flex: 1; padding: 0 2px; }
.layer-row { height: 34px; display: flex; gap: 2px; }
.layer-thumb { width: 32px; flex: none; background: #fff; border: 1px solid #c0c0c0; }
.layer-eye { width: 20px; flex: none; background: #c0c0c0; display: flex; align-items: center; justify-content: center; }
.star { width: 12px; height: 12px; }
.layer-name { flex: 1; background: #bdd5fb; border: 1px solid #2f6fc4; display: flex; align-items: center; justify-content: space-between; padding: 0 3px; }
.sb-btn-dis { opacity: .75; }

/* status */
.statusbar { height: 21px; flex: none; display: flex; align-items: center; padding: 1px 0 0 5px; border-top: 1px solid #fff; border-bottom: 1px solid #f0f0f0; background: #c0c0c0; }
.status-msg { width: 586px; flex: none; white-space: nowrap; }
.pane { height: 17px; flex: none; border: 1px solid; border-color: #b0b0b0 #d0d0d0 #d0d0d0 #b0b0b0; display: flex; align-items: center; gap: 5px; margin-right: 3px; padding-left: 1px; letter-spacing: 1px; }
.p1 { width: 63px; } .p2 { width: 79px; } .p3 { width: 84px; } .p4 { width: 70px; }

/* taskbar */
.taskbar { height: 27px; flex: none; display: flex; align-items: center; padding: 2px 2px 0 3px; background: #c0c0c0; border-top: 1px solid #fff; }
.startbtn { width: 58px; height: 21px; flex: none; display: flex; align-items: center; gap: 2px; padding-left: 2px; background: #c0c0c0; border: 1px solid; border-color: #fff #000 #000 #fff; box-shadow: inset -1px -1px 0 #808080; white-space: nowrap; overflow: hidden; }
.start-label { letter-spacing: -1.6px; }
.tk-handle { width: 3px; height: 20px; flex: none; background: #c8c8c8; border: 1px solid; border-color: #fff #808080 #808080 #fff; margin-left: 5px; }
.quick { display: flex; gap: 7px; padding-left: 8px; width: 189px; flex: none; }
.quick + .tk-handle { margin-left: 0; }
.taskbtn { width: 159px; height: 21px; flex: none; display: flex; align-items: center; gap: 4px; padding-left: 4px; margin-left: 4px; background: #c0c0c0; border: 1px solid; border-color: #fff #000 #000 #fff; box-shadow: inset -1px -1px 0 #808080; white-space: nowrap; overflow: hidden; }
.taskbtn-on { border-color: #000 #fff #fff #000; box-shadow: inset 1px 1px 0 #808080; background: repeating-conic-gradient(#fff 0 25%, #c0c0c0 0 50%) 0 0/2px 2px; }
.tk-fill { flex: 1; }
.tray { width: 185px; height: 21px; flex: none; display: flex; align-items: center; padding-left: 5px; gap: 1.500px; border: 1px solid; border-color: #808080 #fff #fff #808080; box-shadow: -3px 0 0 -2px #808080; }
.sis { width: 16px; font-size: 10px; font-weight: bold; color: #e8d000; background: #206090; text-align: center; line-height: 12px; flex: none; letter-spacing: -.5px; }
.clock { margin-left: auto; margin-right: 6px; }

/* floating language bar */
.langbar { position: absolute; left: 855px; top: 714px; width: 169px; height: 26px; background: #c0c0c0; border: 1px solid; border-color: #fff #808080 #808080 #fff; display: flex; align-items: center; padding-left: 2px; white-space: nowrap; }
.langbar > svg { margin-left: 6px; }
.lang-handle { width: 6px; height: 18px; flex: none; border-left: 2px solid #888; border-right: 2px solid #888; background: #eee; }
.langbar > .lang-a { width: 18px; height: 18px; margin-left: 8px; }
.lang-kan { font-size: 15px; margin-left: 1px; }
.lang-caps { font-size: 7px; line-height: 10px; letter-spacing: .5px; flex: none; margin-left: 3px; }
```
